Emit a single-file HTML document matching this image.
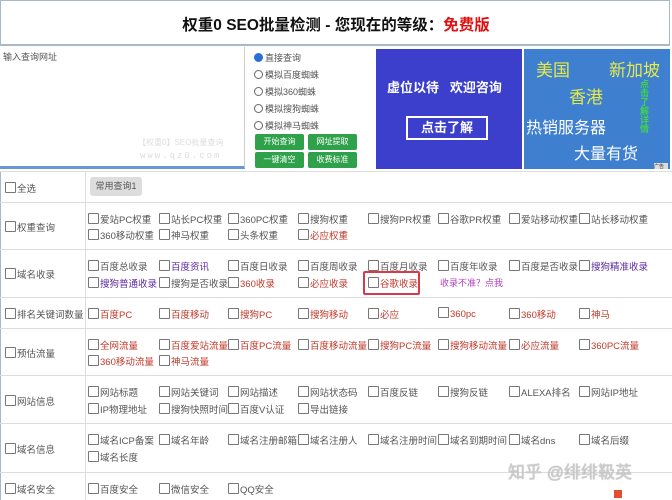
<!DOCTYPE html><html><head><meta charset="utf-8"><style>
body{margin:0;width:672px;height:500px;overflow:hidden;background:#fff;font-family:"Liberation Sans","Noto Sans CJK SC",sans-serif;position:relative;color:#555}
.a{position:absolute;white-space:nowrap}
.h{left:0;top:0;width:670px;height:46px;border:1px solid #a9b8c8;border-bottom:2px solid #a9b8c8;box-sizing:border-box}
.t{font-size:15.5px;font-weight:bold;color:#111;left:0;width:672px;text-align:center;top:13px}
.cb{display:inline-block;width:9px;height:9px;border:1px solid #777;border-radius:1px;vertical-align:-1px;margin-right:1px;background:#fff}
.it{font-size:9.5px;color:#555;position:absolute;white-space:nowrap}
.r{color:#c0392b}.p{color:#5b2aa0}
.line{position:absolute;left:0;width:672px;height:1px;background:#ddd}
.btn{position:absolute;background:#2ea14a;color:#fff;font-size:8px;width:49px;height:16px;line-height:16px;text-align:center;border-radius:2px}
.rad{font-size:9px;position:absolute;left:254px;color:#555}
.rad i{display:inline-block;width:7px;height:7px;border:1px solid #666;border-radius:50%;margin-right:2px;vertical-align:-1px}
</style></head><body>
<div class="a h"></div>
<div class="a t">权重0 SEO批量检测 - 您现在的等级：<span style="color:#e01010">免费版</span></div>
<div class="a" style="left:0;top:47px;width:245px;height:122px;border-right:1px solid #ccc;border-bottom:3px solid #6a96d6;box-sizing:border-box"></div>
<div class="a" style="left:3px;top:50px;font-size:9px;color:#555">输入查询网址</div>
<div class="a" style="left:138px;top:137px;font-size:8px;color:#ddd">【权重0】SEO批量查询</div>
<div class="a" style="left:140px;top:151px;font-size:9px;color:#ddd;font-family:'Liberation Mono',monospace;letter-spacing:2px">www.qz0.com</div>
<div class="rad" style="top:51px"><i style="background:#2a6fd6;border-color:#2a6fd6"></i>直接查询</div>
<div class="rad" style="top:68px"><i></i>模拟百度蜘蛛</div>
<div class="rad" style="top:85px"><i></i>模拟360蜘蛛</div>
<div class="rad" style="top:102px"><i></i>模拟搜狗蜘蛛</div>
<div class="rad" style="top:119px"><i></i>模拟神马蜘蛛</div>
<div class="btn" style="left:255px;top:134px">开始查询</div><div class="btn" style="left:308px;top:134px">网址提取</div>
<div class="btn" style="left:255px;top:152px">一键清空</div><div class="btn" style="left:308px;top:152px">收费标准</div>
<div class="a" style="left:376px;top:49px;width:146px;height:120px;background:#3b3fcb"></div>
<div class="a" style="left:387px;top:77px;font-size:13px;font-weight:bold;color:#fff">虚位以待&nbsp;&nbsp;&nbsp;欢迎咨询</div>
<div class="a" style="left:406px;top:116px;width:82px;height:24px;border:2px solid #fff;box-sizing:border-box;color:#fff;font-weight:bold;font-size:13px;text-align:center;line-height:20px">点击了解</div>
<div class="a" style="left:524px;top:49px;width:146px;height:120px;background:#3e7fcf"></div>
<div class="a" style="left:536px;top:56px;font-size:17px;color:#e6ea4a">美国</div>
<div class="a" style="left:609px;top:56px;font-size:17px;color:#e6ea4a">新加坡</div>
<div class="a" style="left:569px;top:83px;font-size:17px;color:#e6ea4a">香港</div>
<div class="a" style="left:640px;top:80px;font-size:9px;color:#3ed64a;width:9px;white-space:normal;line-height:9px;font-weight:bold">点击了解详情</div>
<div class="a" style="left:526px;top:114px;font-size:16px;color:#fff">热销服务器</div>
<div class="a" style="left:574px;top:140px;font-size:16px;color:#fff">大量有货</div>
<div class="a" style="left:654px;top:163px;width:14px;height:6px;background:#ddd;font-size:5px;color:#333">广告</div>
<div class="a" style="left:85px;top:171px;width:1px;height:329px;background:#ddd"></div>
<div class="a" style="left:0;top:171px;width:1px;height:329px;background:#a9b8c8"></div>
<div class="line" style="top:171px"></div><div class="line" style="top:202px"></div><div class="line" style="top:249px"></div><div class="line" style="top:297px"></div><div class="line" style="top:328px"></div><div class="line" style="top:375px"></div><div class="line" style="top:423px"></div><div class="line" style="top:472px"></div>
<div class="it" style="left:5px;top:181px"><i class="cb"></i>全选</div>
<div class="a" style="left:90px;top:177px;width:52px;height:19px;background:#ddd;border-radius:3px;font-size:9px;line-height:19px;text-align:center;color:#555">常用查询1</div>
<div class="it" style="left:5px;top:220px"><i class="cb"></i>权重查询</div>
<div class="it" style="left:5px;top:267px"><i class="cb"></i>域名收录</div>
<div class="it" style="left:5px;top:307px"><i class="cb"></i>排名关键词数量</div>
<div class="it" style="left:5px;top:346px"><i class="cb"></i>预估流量</div>
<div class="it" style="left:5px;top:394px"><i class="cb"></i>网站信息</div>
<div class="it" style="left:5px;top:442px"><i class="cb"></i>域名信息</div>
<div class="it" style="left:5px;top:482px"><i class="cb"></i>域名安全</div>
<div class="it" style="left:88px;top:212px"><i class="cb"></i>爱站PC权重</div><div class="it" style="left:159px;top:212px"><i class="cb"></i>站长PC权重</div><div class="it" style="left:228px;top:212px"><i class="cb"></i>360PC权重</div><div class="it" style="left:298px;top:212px"><i class="cb"></i>搜狗权重</div><div class="it" style="left:368px;top:212px"><i class="cb"></i>搜狗PR权重</div><div class="it" style="left:438px;top:212px"><i class="cb"></i>谷歌PR权重</div><div class="it" style="left:509px;top:212px"><i class="cb"></i>爱站移动权重</div><div class="it" style="left:579px;top:212px"><i class="cb"></i>站长移动权重</div>
<div class="it" style="left:88px;top:228px"><i class="cb"></i>360移动权重</div><div class="it" style="left:159px;top:228px"><i class="cb"></i>神马权重</div><div class="it" style="left:228px;top:228px"><i class="cb"></i>头条权重</div><div class="it r" style="left:298px;top:228px"><i class="cb"></i>必应权重</div>
<div class="it" style="left:88px;top:259px"><i class="cb"></i>百度总收录</div><div class="it p" style="left:159px;top:259px"><i class="cb"></i>百度资讯</div><div class="it" style="left:228px;top:259px"><i class="cb"></i>百度日收录</div><div class="it" style="left:298px;top:259px"><i class="cb"></i>百度周收录</div><div class="it" style="left:368px;top:259px"><i class="cb"></i>百度月收录</div><div class="it" style="left:438px;top:259px"><i class="cb"></i>百度年收录</div><div class="it" style="left:509px;top:259px"><i class="cb"></i>百度是否收录</div><div class="it p" style="left:579px;top:259px"><i class="cb"></i>搜狗精准收录</div>
<div class="it p" style="left:88px;top:276px"><i class="cb"></i>搜狗普通收录</div><div class="it" style="left:159px;top:276px"><i class="cb"></i>搜狗是否收录</div><div class="it r" style="left:228px;top:276px"><i class="cb"></i>360收录</div><div class="it r" style="left:298px;top:276px"><i class="cb"></i>必应收录</div><div class="it r" style="left:368px;top:276px"><i class="cb"></i>谷歌收录</div><div class="it" style="left:440px;top:276px;color:#b040c0;font-size:9px">收录不准？点我</div>
<div class="a" style="left:363px;top:271px;width:57px;height:24px;border:2px solid #d83a4a;border-radius:2px;box-sizing:border-box"></div>
<div class="it r" style="left:88px;top:307px"><i class="cb"></i>百度PC</div><div class="it r" style="left:159px;top:307px"><i class="cb"></i>百度移动</div><div class="it r" style="left:228px;top:307px"><i class="cb"></i>搜狗PC</div><div class="it r" style="left:298px;top:307px"><i class="cb"></i>搜狗移动</div><div class="it r" style="left:368px;top:307px"><i class="cb"></i>必应</div><div class="it r" style="left:438px;top:307px"><i class="cb"></i>360pc</div><div class="it r" style="left:509px;top:307px"><i class="cb"></i>360移动</div><div class="it r" style="left:579px;top:307px"><i class="cb"></i>神马</div>
<div class="it r" style="left:88px;top:338px"><i class="cb"></i>全网流量</div><div class="it r" style="left:159px;top:338px"><i class="cb"></i>百度爱站流量</div><div class="it r" style="left:228px;top:338px"><i class="cb"></i>百度PC流量</div><div class="it r" style="left:298px;top:338px"><i class="cb"></i>百度移动流量</div><div class="it r" style="left:368px;top:338px"><i class="cb"></i>搜狗PC流量</div><div class="it r" style="left:438px;top:338px"><i class="cb"></i>搜狗移动流量</div><div class="it r" style="left:509px;top:338px"><i class="cb"></i>必应流量</div><div class="it r" style="left:579px;top:338px"><i class="cb"></i>360PC流量</div>
<div class="it r" style="left:88px;top:354px"><i class="cb"></i>360移动流量</div><div class="it r" style="left:159px;top:354px"><i class="cb"></i>神马流量</div>
<div class="it" style="left:88px;top:385px"><i class="cb"></i>网站标题</div><div class="it" style="left:159px;top:385px"><i class="cb"></i>网站关键词</div><div class="it" style="left:228px;top:385px"><i class="cb"></i>网站描述</div><div class="it" style="left:298px;top:385px"><i class="cb"></i>网站状态码</div><div class="it" style="left:368px;top:385px"><i class="cb"></i>百度反链</div><div class="it" style="left:438px;top:385px"><i class="cb"></i>搜狗反链</div><div class="it" style="left:509px;top:385px"><i class="cb"></i>ALEXA排名</div><div class="it" style="left:579px;top:385px"><i class="cb"></i>网站IP地址</div>
<div class="it" style="left:88px;top:402px"><i class="cb"></i>IP物理地址</div><div class="it" style="left:159px;top:402px"><i class="cb"></i>搜狗快照时间</div><div class="it" style="left:228px;top:402px"><i class="cb"></i>百度V认证</div><div class="it" style="left:298px;top:402px"><i class="cb"></i>导出链接</div>
<div class="it" style="left:88px;top:433px"><i class="cb"></i>域名ICP备案</div><div class="it" style="left:159px;top:433px"><i class="cb"></i>域名年龄</div><div class="it" style="left:228px;top:433px"><i class="cb"></i>域名注册邮箱</div><div class="it" style="left:298px;top:433px"><i class="cb"></i>域名注册人</div><div class="it" style="left:368px;top:433px"><i class="cb"></i>域名注册时间</div><div class="it" style="left:438px;top:433px"><i class="cb"></i>域名到期时间</div><div class="it" style="left:509px;top:433px"><i class="cb"></i>域名dns</div><div class="it" style="left:579px;top:433px"><i class="cb"></i>域名后缀</div>
<div class="it" style="left:88px;top:450px"><i class="cb"></i>域名长度</div>
<div class="it" style="left:88px;top:482px"><i class="cb"></i>百度安全</div><div class="it" style="left:159px;top:482px"><i class="cb"></i>微信安全</div><div class="it" style="left:228px;top:482px"><i class="cb"></i>QQ安全</div>
<div class="a" style="left:508px;top:458px;font-size:17px;color:#ccc;text-shadow:0 0 1px #888">知乎 @绯绯靸英</div>
<div class="a" style="left:614px;top:490px;width:8px;height:8px;background:#e05030"></div>
</body></html>
